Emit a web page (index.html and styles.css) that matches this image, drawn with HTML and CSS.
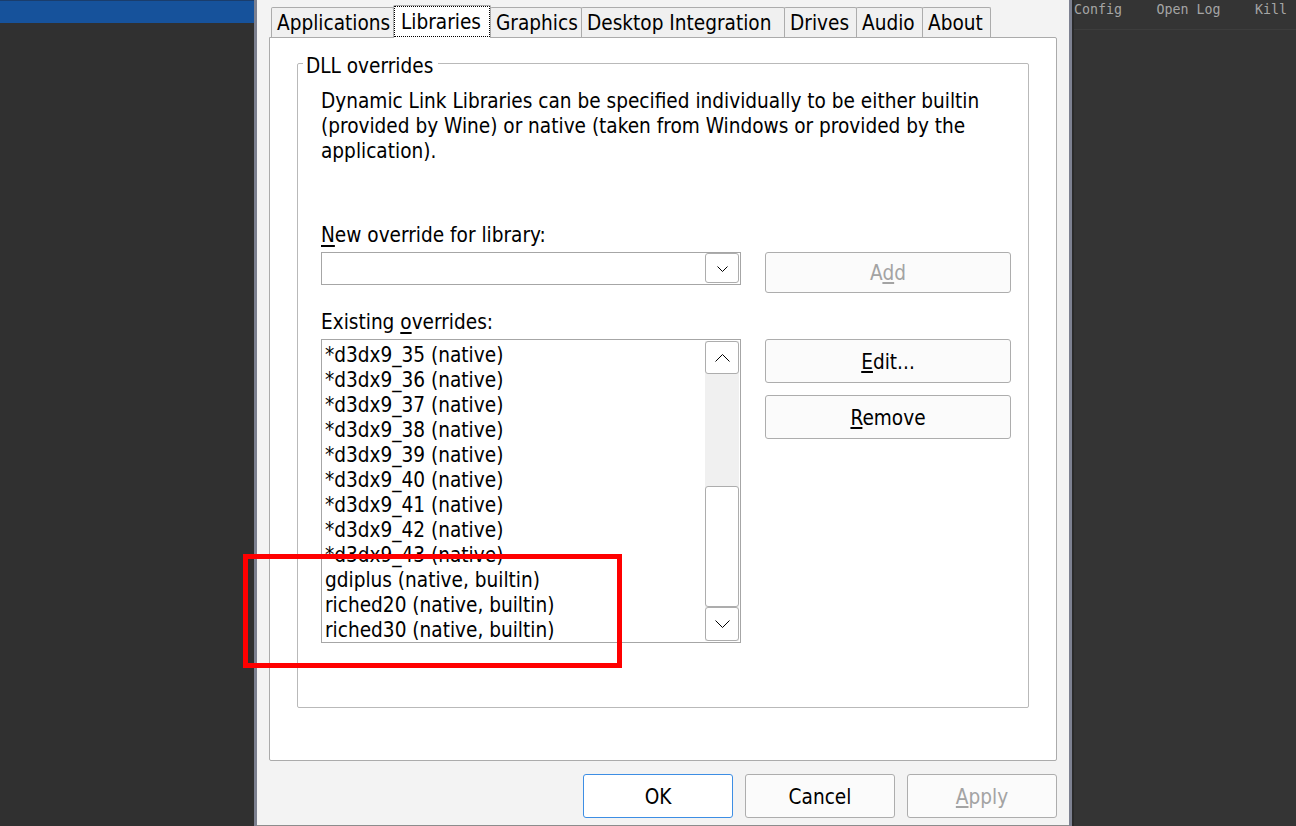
FILE: index.html
```html
<!DOCTYPE html>
<html>
<head>
<meta charset="utf-8">
<title>Wine configuration - Libraries</title>
<link rel="stylesheet" href="styles.css">
</head>
<body>
  <div class="left-pane">
    <div class="left-bar"></div>
  </div>
  <div class="edge"></div>
  <div class="dialog">
    <div class="tabs">
      <div class="tab tab-applications">Applications</div>
      <div class="tab tab-active tab-libraries"><span class="tab-focus">Libraries</span></div>
      <div class="tab tab-graphics">Graphics</div>
      <div class="tab tab-desktop">Desktop Integration</div>
      <div class="tab tab-drives">Drives</div>
      <div class="tab tab-audio">Audio</div>
      <div class="tab tab-about">About</div>
    </div>
    <div class="panel">
      <fieldset class="group">
        <legend class="group-title">DLL overrides</legend>
        <p class="desc">Dynamic Link Libraries can be specified individually to be either builtin (provided by Wine) or native (taken from Windows or provided by the application).</p>
        <div class="label label-new"><u>N</u>ew override for library:</div>
        <div class="row row-combo">
          <div class="combo">
            <div class="combo-btn">
              <svg width="11" height="6" viewBox="0 0 11 6"><polyline points="0.5,0.5 5.5,5.5 10.5,0.5" fill="none" stroke="#000" stroke-width="1"/></svg>
            </div>
          </div>
          <div class="btn btn-side btn-add disabled"><span>A<u>d</u>d</span></div>
        </div>
        <div class="label label-existing">Existing <u>o</u>verrides:</div>
        <div class="row row-list">
          <div class="list">
            <div class="list-items">
              <div class="item">*d3dx9_35 (native)</div>
              <div class="item">*d3dx9_36 (native)</div>
              <div class="item">*d3dx9_37 (native)</div>
              <div class="item">*d3dx9_38 (native)</div>
              <div class="item">*d3dx9_39 (native)</div>
              <div class="item">*d3dx9_40 (native)</div>
              <div class="item">*d3dx9_41 (native)</div>
              <div class="item">*d3dx9_42 (native)</div>
              <div class="item">*d3dx9_43 (native)</div>
              <div class="item">gdiplus (native, builtin)</div>
              <div class="item">riched20 (native, builtin)</div>
              <div class="item">riched30 (native, builtin)</div>
            </div>
            <div class="scrollbar">
              <div class="sb-btn sb-up">
                <svg width="15" height="8" viewBox="0 0 15 8"><polyline points="0.5,7.5 7.5,0.5 14.5,7.5" fill="none" stroke="#000" stroke-width="1"/></svg>
              </div>
              <div class="sb-track"></div>
              <div class="sb-thumb"></div>
              <div class="sb-btn sb-down">
                <svg width="15" height="8" viewBox="0 0 15 8"><polyline points="0.5,0.5 7.5,7.5 14.5,0.5" fill="none" stroke="#000" stroke-width="1"/></svg>
              </div>
            </div>
          </div>
          <div class="side-buttons">
            <div class="btn btn-side btn-edit"><span><u>E</u>dit...</span></div>
            <div class="btn btn-side btn-remove"><span><u>R</u>emove</span></div>
          </div>
        </div>
      </fieldset>
    </div>
    <div class="footer">
      <div class="btn btn-foot btn-default"><span>OK</span></div>
      <div class="btn btn-foot"><span>Cancel</span></div>
      <div class="btn btn-foot disabled"><span><u>A</u>pply</span></div>
    </div>
  </div>
  <div class="edge edge-right"></div>
  <div class="right-pane">
    <div class="right-head">
      <span>Config</span>
      <span>Open Log</span>
      <span>Kill</span>
    </div>
  </div>
  <div class="highlight"></div>
</body>
</html>
```

FILE: styles.css
```css
* { box-sizing: border-box; }

html, body { margin: 0; padding: 0; }

body {
  width: 1296px;
  height: 826px;
  overflow: hidden;
  background: #343434;
  display: flex;
  position: relative;
  font-family: "DejaVu Sans Condensed", "DejaVu Sans", sans-serif;
}

.left-pane {
  width: 254px;
  flex: none;
  background: #303030;
}

.left-bar {
  height: 23px;
  background: #16529b;
  border-top: 1px solid #1a3d6c;
}

.edge {
  width: 3px;
  flex: none;
  background: #7c808f;
}

.dialog {
  width: 812px;
  flex: none;
  background: #f3f3f3;
  padding: 5px 12px 0;
  border-bottom: 1px solid #8c8c8c;
  font-size: 20.6px;
  line-height: 25px;
  color: #000;
  display: flex;
  flex-direction: column;
}

/* Tabs */
.tabs {
  display: flex;
  align-items: flex-end;
  height: 32px;
  padding-left: 2px;
}

.tab {
  flex: none;
  height: 30px;
  padding: 1px 0 0 5px;
  line-height: 28px;
  border: 1px solid #acacac;
  border-bottom: none;
  border-radius: 2px 2px 0 0;
  background: #f0f0f0;
  margin-right: -1px;
  white-space: nowrap;
  overflow: hidden;
}

.tab-applications { width: 123px; }
.tab-libraries { width: 98px; }
.tab-graphics { width: 92px; }
.tab-desktop { width: 204px; }
.tab-drives { width: 73px; }
.tab-audio { width: 67px; }
.tab-about { width: 69px; }

.tab-active {
  height: 33px;
  margin-bottom: -1px;
  padding: 0;
  background: #fff;
  position: relative;
  z-index: 1;
}

.tab-focus {
  display: block;
  height: 31px;
  line-height: 28px;
  padding: 1px 0 0 6px;
  border: 1px dotted #000;
}

/* Panel */
.panel {
  height: 724px;
  background: #fff;
  border: 1px solid #ababab;
  border-radius: 0 2px 2px 2px;
}

.group {
  margin: 9px 27px 0;
  padding: 10px 17px 64px 23px;
  border: 1px solid #b9b9b9;
  border-radius: 2px;
  min-width: 0;
}

.group-title {
  margin-left: -18px;
  padding: 7px 5px 0 3px;
  line-height: 25px;
}

.desc {
  margin: 0;
}

.label { white-space: nowrap; }
.label u { text-underline-offset: 3px; }

.label-new { margin-top: 59px; }
.label-existing { margin-top: 17px; }

.row {
  display: flex;
  gap: 24px;
  margin-top: 4px;
  align-items: flex-start;
}

.combo {
  flex: none;
  width: 420px;
  height: 33px;
  border: 1px solid #a6a6a6;
  background: #fff;
  display: flex;
  justify-content: flex-end;
  padding: 0 1px 1px 0;
}

.combo-btn {
  width: 34px;
  height: 30px;
  border: 1px solid #adadad;
  border-radius: 3px;
  background: #fff;
  display: flex;
  align-items: center;
  justify-content: center;
}

.combo-btn svg { display: block; margin-top: 1px; }

/* Buttons */
.btn {
  border: 1px solid #adadad;
  border-radius: 3px;
  background: #fbfbfb;
  display: flex;
  align-items: center;
  justify-content: center;
  padding-top: 2px;
  white-space: nowrap;
}

.btn u { text-underline-offset: 2px; }

.btn-side { flex: none; width: 246px; }
.btn-add { height: 41px; }
.btn-edit, .btn-remove { height: 44px; }

.side-buttons {
  flex: none;
  display: flex;
  flex-direction: column;
  gap: 12px;
}

.disabled { color: #a3a3a3; }

/* List */
.list {
  flex: none;
  width: 420px;
  height: 304px;
  border: 1px solid #a6a6a6;
  background: #fff;
  display: flex;
  padding-right: 1px;
}

.list-items {
  flex: 1;
  padding: 3px 0 0 3px;
  overflow: hidden;
  white-space: nowrap;
}

.item { height: 25px; }

.scrollbar {
  flex: none;
  width: 34px;
  margin: 1px 0;
  background: #f0f0f0;
  display: flex;
  flex-direction: column;
}

.sb-btn {
  border: 1px solid #adadad;
  border-radius: 3px;
  background: #fff;
  display: flex;
  align-items: center;
  justify-content: center;
}

.sb-btn svg { display: block; }

.sb-up { height: 33px; }
.sb-down { height: 34px; }
.sb-track { flex: 1; }

.sb-thumb {
  height: 121px;
  border: 1px solid #adadad;
  border-radius: 3px;
  background: #fff;
}

/* Footer */
.footer {
  margin-top: 13px;
  display: flex;
  justify-content: flex-end;
  gap: 12px;
}

.btn-foot {
  width: 150px;
  height: 44px;
}

.btn-default {
  border-color: #3d8ee4;
  background: #fff;
}

/* Right pane */
.edge-right { background: #7d8191; }

.right-pane {
  flex: 1;
  background: #343434;
  border-left: 2px solid #2a2a2a;
}

.right-head {
  height: 30px;
  border-bottom: 1px solid #3d3d3d;
  display: flex;
  justify-content: space-between;
  padding: 0 9px 0 0;
  font-family: "DejaVu Sans Mono", monospace;
  font-size: 13.3px;
  line-height: 20px;
  color: #a5a5a5;
}

/* Annotation overlay */
.highlight {
  position: absolute;
  left: 243px;
  top: 554px;
  width: 379px;
  height: 114px;
  border: 5px solid #ff0000;
}
```
